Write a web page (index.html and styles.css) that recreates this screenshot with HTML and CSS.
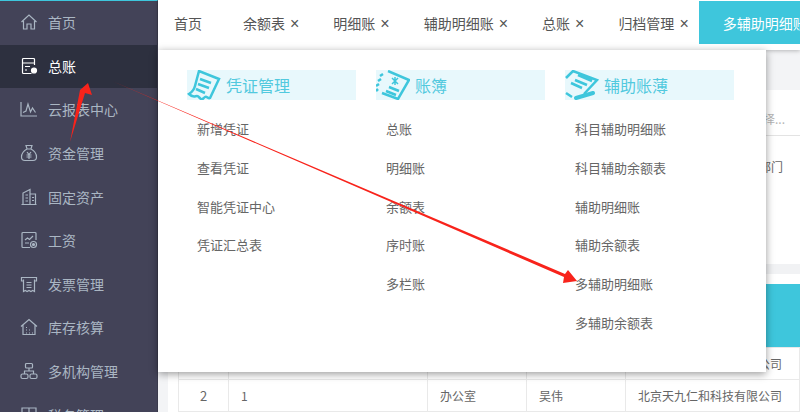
FILE: index.html
```html
<!DOCTYPE html>
<html lang="en">
<head>
    <meta charset="UTF-8">
    <title>总账</title>
    <link rel="stylesheet" href="styles.css">
</head>
<body>
    <div class="app">
        <nav class="sidebar">
            <a class="nav-item">
                <svg class="nav-icon" viewBox="0 0 18 18"><path d="M1.500 9 9 2l7.500 7M3.500 8v8h3.500v-5h4v5h3.500V8"/></svg>
                首页
            </a>
            <a class="nav-item active">
                <svg class="nav-icon" viewBox="0 0 18 18"><path d="M14.500 8V2.500a1 1 0 0 0-1-1h-10a1 1 0 0 0-1 1v13a1 1 0 0 0 1 1h8M2.500 6h12M5 9.500h5M5 13h2"/><circle class="dot" cx="14" cy="13.500" r="2.500"/></svg>
                总账
            </a>
            <a class="nav-item">
                <svg class="nav-icon" viewBox="0 0 18 18"><path d="M1 2v14h16M3 12.500 6 11l2-7 2.500 8 2-4 3 4.500"/></svg>
                云报表中心
            </a>
            <a class="nav-item">
                <svg class="nav-icon" viewBox="0 0 18 18"><path d="M6 1.500h6L11 5H7zM7 5C3.500 7 1.500 10 1.500 13c0 2 1 3.500 3.500 3.500h8c2.500 0 3.500-1.500 3.500-3.500 0-3-2-6-5.500-8M7 8l2 2.500L11 8M6.500 11h5M6.500 13h5M9 10.500V15"/></svg>
                资金管理
            </a>
            <a class="nav-item">
                <svg class="nav-icon" viewBox="0 0 18 18"><path d="M3 16.500V5l7-3.500v15M10 6h5.500v10.500M1.500 16.500h15M5.500 7H8M5.500 10H8M5.500 13H8M12 9.500h2M12 12.500h2"/></svg>
                固定资产
            </a>
            <a class="nav-item">
                <svg class="nav-icon" viewBox="0 0 18 18"><path d="M16 9V2.500a1 1 0 0 0-1-1H3a1 1 0 0 0-1 1v13a1 1 0 0 0 1 1h7M5 9l2.500-2 2 1.500L13 5M5 12h4"/><circle cx="13.500" cy="13.500" r="3"/><circle class="dot" cx="13.500" cy="13.500" r="1"/></svg>
                工资
            </a>
            <a class="nav-item">
                <svg class="nav-icon" viewBox="0 0 18 18"><path d="M3 6H1.500V2.500h15V6H15M3.500 4.500v12l1.800-1 1.800 1 1.900-1 1.900 1 1.800-1 1.800 1v-12M6.500 7.500h5M6.500 10h5M6.500 12.500h5"/></svg>
                发票管理
            </a>
            <a class="nav-item">
                <svg class="nav-icon" viewBox="0 0 18 18"><path d="M1 8.500 9 1.500l8 7M3 7v9.500h12V7M6 9.500h1M6 12h1M6 15h1M9 12h1M9 15h1M12 15h1"/></svg>
                库存核算
            </a>
            <a class="nav-item">
                <svg class="nav-icon" viewBox="0 0 18 18"><rect x="5.500" y="1.500" width="7" height="4.500" rx="1"/><rect x="1" y="12" width="7" height="4.500" rx="1.500"/><rect x="10" y="12" width="7" height="4.500" rx="1.500"/><path d="M9 6v3M4.500 12V9h9v3"/></svg>
                多机构管理
            </a>
            <a class="nav-item">
                <svg class="nav-icon" viewBox="0 0 18 18"><path d="M2 2h14v5H2zM9 2v14M4 10h10M5 13h8"/></svg>
                税务管理
            </a>
        </nav>

        <main class="main">
            <div class="tabs">
                <span class="tab first">首页</span>
                <span class="tab">余额表<i class="close">×</i></span>
                <span class="tab">明细账<i class="close">×</i></span>
                <span class="tab">辅助明细账<i class="close">×</i></span>
                <span class="tab">总账<i class="close">×</i></span>
                <span class="tab">归档管理<i class="close">×</i></span>
                <span class="tab current">多辅助明细账</span>
            </div>

            <div class="content">
                <div class="panel">
                    <div class="filters">
                        <div class="filter-line"><span class="placeholder">请选择...</span></div>
                        <div class="filter-label">所属部门</div>
                    </div>
                    <div class="band"></div>
                    <table class="grid">
                        <thead>
                            <tr><th class="c-no"></th><th class="c-code"></th><th class="c-dept"></th><th class="c-man"></th><th></th></tr>
                        </thead>
                        <tbody>
                            <tr><td class="num">1</td><td>1</td><td>办公室</td><td>吴伟</td><td>北京天九仁和科技有限公司</td></tr>
                            <tr><td class="num">2</td><td>1</td><td>办公室</td><td>吴伟</td><td>北京天九仁和科技有限公司</td></tr>
                        </tbody>
                    </table>
                </div>
            </div>
        </main>
    </div>

    <div class="menu">
        <section class="menu-col">
            <h3 class="menu-head">
                <svg class="head-icon" viewBox="0 0 34 30"><path d="M12 1 32 9 23 28c-2 1-3-2-5-1s-2 3-4 2-2-3-4-3-4 2-8-2c3-2 5-4 6-8zM13 9l11 4M11 14l11 4M9 19l9 4"/></svg>
                凭证管理
            </h3>
            <a class="menu-link">新增凭证</a>
            <a class="menu-link">查看凭证</a>
            <a class="menu-link">智能凭证中心</a>
            <a class="menu-link">凭证汇总表</a>
        </section>
        <section class="menu-col">
            <h3 class="menu-head">
                <svg class="head-icon" viewBox="0 0 34 30"><path d="M12 1 33 10 22 29 6 23M7 4 4 6M5 9l-3 2M3 14l-3 2M2 19l-2 2M13 17l10 4M10 21l10 4"/><path class="star" d="M16 8l6 6M22 8l-6 6M19 7v8"/></svg>
                账簿
            </h3>
            <a class="menu-link">总账</a>
            <a class="menu-link">明细账</a>
            <a class="menu-link">余额表</a>
            <a class="menu-link">序时账</a>
            <a class="menu-link">多栏账</a>
        </section>
        <section class="menu-col">
            <h3 class="menu-head">
                <svg class="head-icon" viewBox="0 0 34 30"><path d="M1 8 8 1 32 10 19 24M13 5l14 6M10 10l12 5M6 13l11 5M1 23l6 4"/><path class="pen" d="M11 28l17-5"/></svg>
                辅助账薄
            </h3>
            <a class="menu-link">科目辅助明细账</a>
            <a class="menu-link">科目辅助余额表</a>
            <a class="menu-link">辅助明细账</a>
            <a class="menu-link">辅助余额表</a>
            <a class="menu-link">多辅助明细账</a>
            <a class="menu-link">多辅助余额表</a>
        </section>
    </div>

    <!-- hand drawn annotation arrows over the screenshot -->
    <svg class="arrows" viewBox="0 0 800 412">
        <polygon points="70,142 80,90 88,83 92,95 85,93"/>
        <polygon points="112,81 565,274 568,270 577,281 563,283 564,277"/>
    </svg>
</body>
</html>
```

FILE: styles.css
```css
* {
    box-sizing: border-box;
}
html, body {
    margin: 0;
    height: 100%;
    overflow: hidden;
}
body {
    font-family: "Noto Sans CJK SC", "Noto Sans", sans-serif;
    font-size: 14px;
    color: #666;
    background: #fff;
}
.app {
    display: flex;
    height: 412px;
}

/* left navigation */
.sidebar {
    flex: 0 0 158px;
    height: 460px;
    background: #434358;
    border-top: 1px solid #3ec6dc;
    border-right: 1px solid #3a3a4c;
}
.nav-item {
    display: flex;
    align-items: center;
    gap: 10px;
    height: 43.600px;
    padding: 0 0 1px 20px;
    color: #aab6c3;
    white-space: nowrap;
}
.nav-item.active {
    background: #2d303f;
    color: #fff;
}
.nav-icon {
    width: 18px;
    height: 18px;
    fill: none;
    stroke: currentColor;
    stroke-width: 1.200;
    flex: none;
}
.nav-icon .dot {
    fill: currentColor;
}

/* tab strip */
.main {
    flex: 1;
    min-width: 0;
    display: flex;
    flex-direction: column;
}
.tabs {
    display: flex;
    align-items: flex-start;
    height: 50px;
    padding: 1px 0 0 16px;
    background: #fff;
    box-shadow: 0 1px 4px rgba(0, 0, 0, .25);
    white-space: nowrap;
    color: #555;
    position: relative;
}
.tab {
    flex: none;
    height: 43px;
    line-height: 44px;
    margin-right: 34px;
}
.tab.first {
    margin-right: 41px;
}
.close {
    font-family: "Liberation Sans", sans-serif;
    font-style: normal;
    font-size: 16px;
    margin-left: 5px;
}
.tab.current {
    margin: 0 0 0 -24px;
    padding-left: 24px;
    width: 125px;
    overflow: hidden;
    background: #3ec6dc;
    color: #fff;
}

/* page behind the menu */
.content {
    flex: 1;
    padding: 40px 0 0 10px;
    background: #f3f4f6;
}
.panel {
    height: 100%;
    padding-left: 10px;
    background: #fff;
}
.filters {
    height: 174px;
    padding-top: 20px;
    font-size: 12px;
    text-align: right;
    overflow: hidden;
}
.filter-line {
    width: 120px;
    height: 26px;
    margin-left: auto;
    padding-right: 15px;
    border-bottom: 1px solid #e3e3e3;
}
.placeholder {
    color: #b5b5b5;
}
.filter-label {
    margin: 22px 0 0 auto;
    padding-right: 17px;
    color: #666;
    white-space: nowrap;
}
.band {
    height: 10px;
    margin-left: -20px;
    background: #f1f2f4;
}
.grid {
    margin-top: 10px;
    width: 622px;
    table-layout: fixed;
    border-collapse: collapse;
    font-size: 12px;
    color: #666;
}
.grid th {
    height: 63px;
    padding: 0;
    background: #3ec6dc;
}
.grid td {
    height: 32px;
    padding: 0 12px;
    border: 1px solid #e9e9e9;
    white-space: nowrap;
}
.grid td.num {
    padding: 0;
    text-align: center;
    font-size: 13px;
}
.c-no { width: 50px; }
.c-code { width: 199px; }
.c-dept { width: 99px; }
.c-man { width: 99px; }

/* drop down over the page */
.menu {
    position: absolute;
    left: 158px;
    top: 50px;
    width: 608px;
    height: 322px;
    display: flex;
    gap: 20px;
    padding: 20px 0 0 29px;
    background: #fff;
    box-shadow: 0 2px 8px rgba(0, 0, 0, .4);
}
.menu-col {
    width: 169px;
}
.menu-head {
    display: flex;
    align-items: center;
    gap: 5px;
    height: 30px;
    margin: 0 0 10px;
    font-size: 16px;
    font-weight: 400;
    color: #52c9de;
    background: #e8f8fc;
}
.head-icon {
    width: 34px;
    height: 30px;
    fill: none;
    stroke: #3ec6dc;
    stroke-width: 2.500;
    flex: none;
}
.head-icon .pen {
    stroke-width: 4;
    stroke-linecap: round;
}
.head-icon .star {
    stroke-width: 1.500;
}
.menu-link {
    display: block;
    height: 38.800px;
    line-height: 38.800px;
    padding-left: 10px;
    font-size: 13px;
    color: #666;
}

/* annotation */
.arrows {
    position: absolute;
    left: 0;
    top: 0;
    width: 800px;
    height: 412px;
    fill: #f8231b;
    pointer-events: none;
}
```
